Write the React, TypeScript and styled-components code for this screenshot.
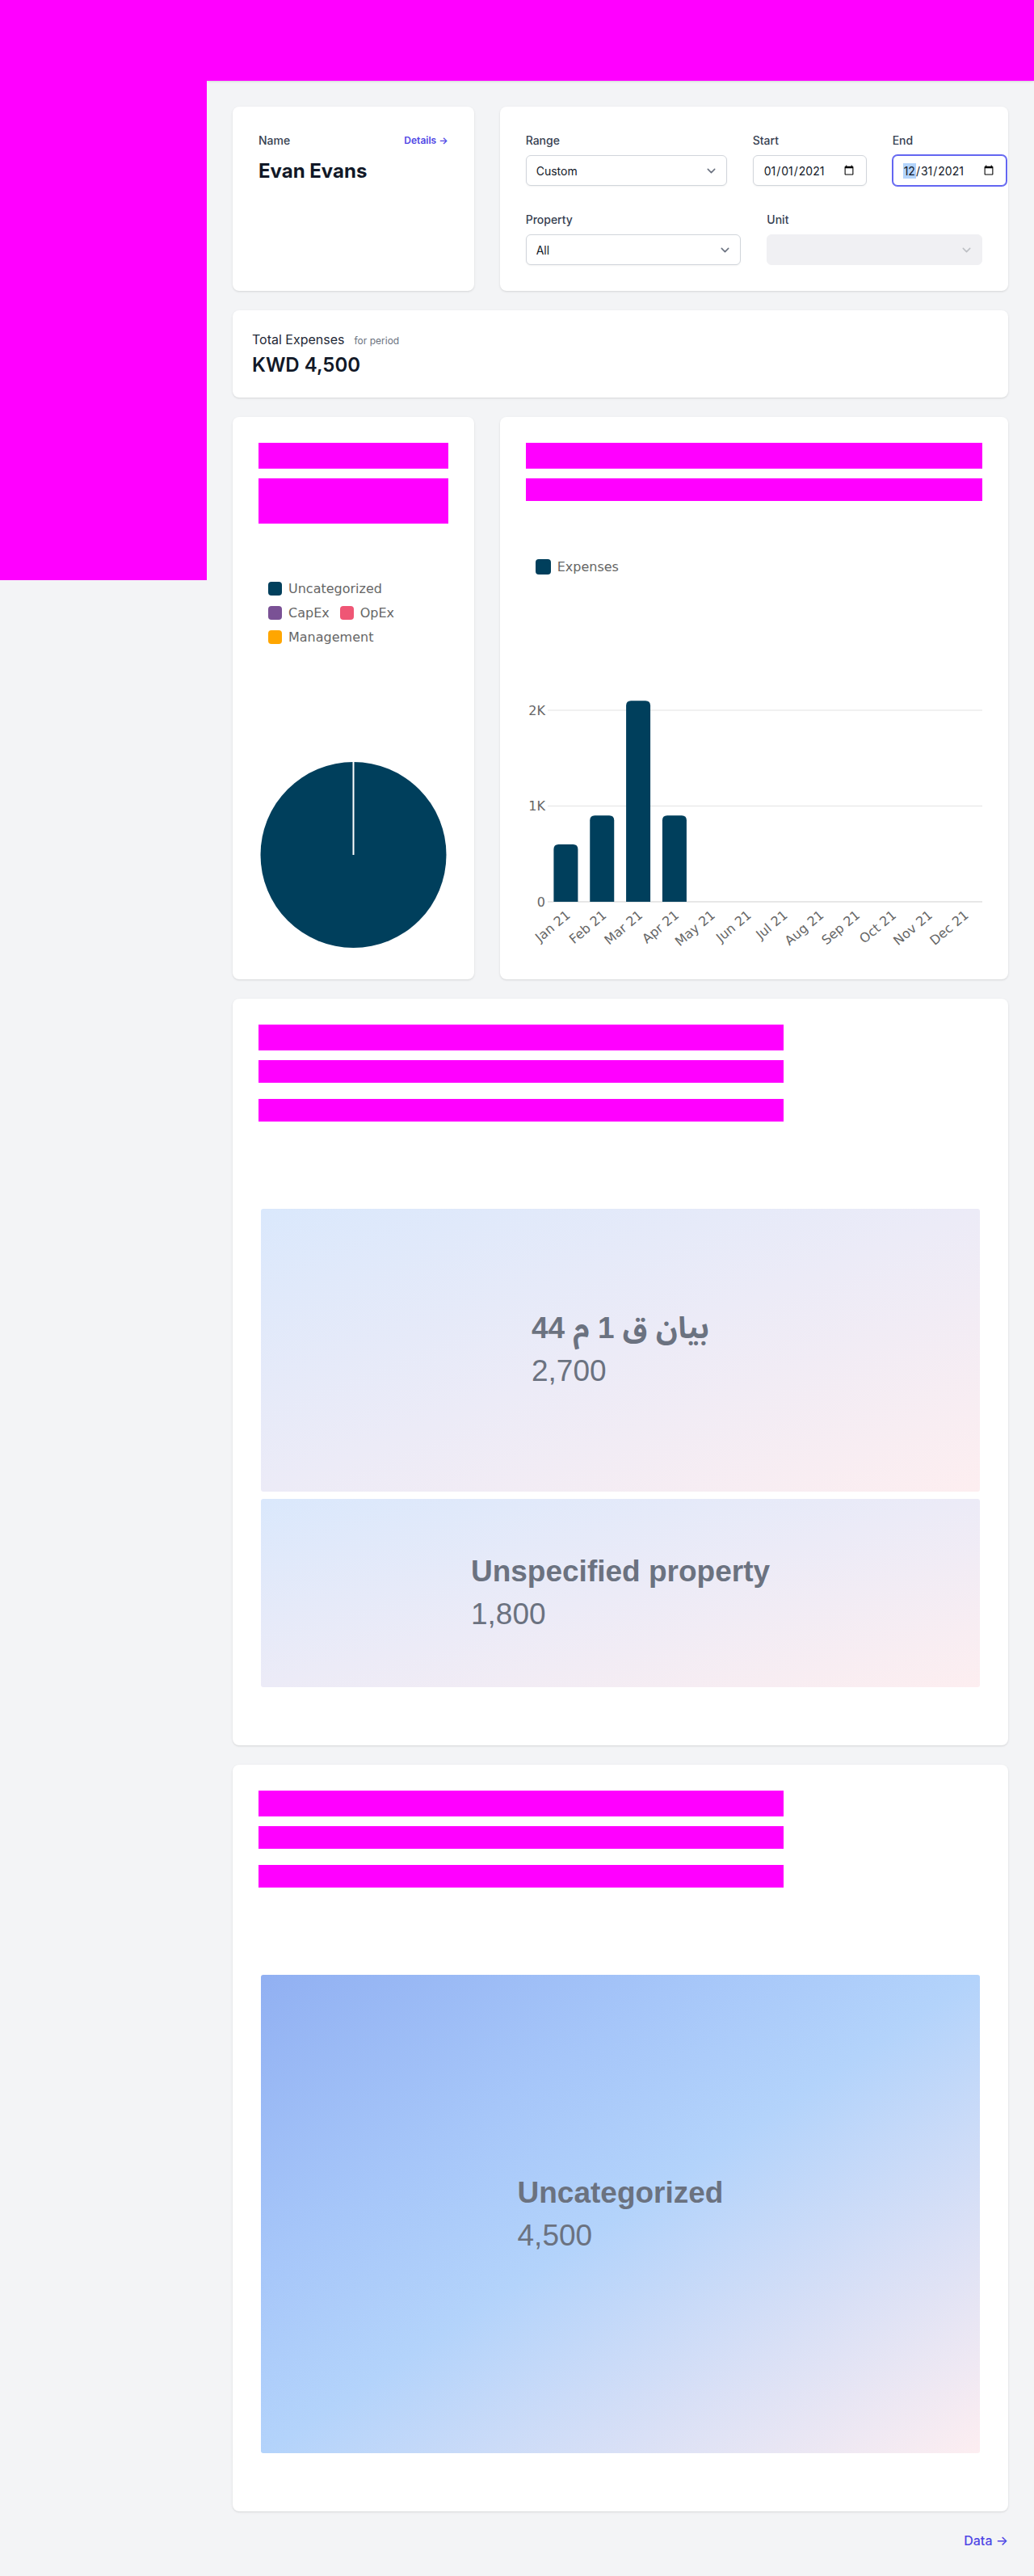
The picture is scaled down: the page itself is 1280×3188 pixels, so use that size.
import React from "react";
import styled, { createGlobalStyle } from "styled-components";

const GlobalStyle = createGlobalStyle`
  * { box-sizing: border-box; }
  html, body { margin: 0; padding: 0; }
  body {
    background: #f3f4f6;
    font-family: Inter, "Noto Sans", sans-serif;
    color: #111827;
    -webkit-font-smoothing: antialiased;
  }
`;

const MAGENTA = "#ff00ff";
const CHEVRON = (c: string) =>
  `url("data:image/svg+xml,%3csvg xmlns='http://www.w3.org/2000/svg' fill='none' viewBox='0 0 20 20'%3e%3cpath stroke='%23${c}' stroke-linecap='round' stroke-linejoin='round' stroke-width='1.5' d='M6 8l4 4 4-4'/%3e%3c/svg%3e")`;

const Shell = styled.div`
  display: grid;
  grid-template-columns: 256px minmax(0, 1fr);
  align-items: start;
`;

const Sidebar = styled.aside`
  height: 718px;
  background: ${MAGENTA};
  position: relative;
  z-index: 2;
`;

const Column = styled.div`
  display: flex;
  flex-direction: column;
  min-width: 0;
`;

const Header = styled.header`
  height: 100px;
  background: ${MAGENTA};
  position: relative;
  z-index: 1;
  box-shadow: 0 1px 3px 0 rgba(0, 0, 0, 0.1), 0 1px 2px -1px rgba(0, 0, 0, 0.1);
`;

const Main = styled.main`
  padding: 32px;
  display: flex;
  flex-direction: column;
  gap: 24px;
`;

const Row3 = styled.div`
  display: grid;
  grid-template-columns: repeat(3, minmax(0, 1fr));
  column-gap: 32px;
`;

const Card = styled.section<{ $span?: number; $pad?: number }>`
  grid-column: span ${(p) => p.$span ?? 1};
  background: #ffffff;
  border-radius: 8px;
  box-shadow: 0 1px 3px 0 rgba(0, 0, 0, 0.1), 0 1px 2px -1px rgba(0, 0, 0, 0.1);
  padding: ${(p) => p.$pad ?? 32}px;
  display: flex;
  flex-direction: column;
  min-width: 0;
`;

const Placeholder = styled.div<{ $h: number; $w?: number; $mt?: number }>`
  background: ${MAGENTA};
  height: ${(p) => p.$h}px;
  width: ${(p) => (p.$w ? `${p.$w}px` : "100%")};
  margin-top: ${(p) => p.$mt ?? 0}px;
  flex-shrink: 0;
`;

/* ---- Name card ---- */
const NameHead = styled.div`
  display: flex;
  justify-content: space-between;
  align-items: center;
`;

const FieldLabel = styled.label`
  font-size: 14px;
  line-height: 20px;
  font-weight: 500;
  color: #374151;
`;

const SmallLink = styled.a`
  font-size: 12px;
  line-height: 16px;
  font-weight: 600;
  color: #4f46e5;
  text-decoration: none;
`;

const PersonName = styled.h2`
  margin: 12px 0 0;
  font-size: 24px;
  line-height: 32px;
  font-weight: 700;
  color: #111827;
`;

/* ---- Filter card ---- */
const FilterBody = styled.div`
  display: flex;
  flex-direction: column;
  gap: 32px;
`;

const DateRow = styled.div`
  display: grid;
  grid-template-columns: 249px 141px 141px;
  column-gap: 32px;
`;

const PairRow = styled.div`
  display: grid;
  grid-template-columns: repeat(2, minmax(0, 1fr));
  column-gap: 32px;
`;

const Field = styled.div`
  display: flex;
  flex-direction: column;
  gap: 8px;
  min-width: 0;
`;

const Select = styled.select`
  appearance: none;
  -webkit-appearance: none;
  height: 38px;
  width: 100%;
  border: 1px solid #d1d5db;
  border-radius: 6px;
  padding: 0 40px 0 12px;
  font-family: Inter, sans-serif;
  font-size: 14px;
  color: #111827;
  background: #ffffff ${CHEVRON("6b7280")} no-repeat right 8px center / 21px 21px;
  box-shadow: 0 1px 2px 0 rgba(0, 0, 0, 0.05);
  &:disabled {
    background-color: #eaebee;
    background-image: ${CHEVRON("a3a6ad")};
    border-color: #eaebee;
    box-shadow: none;
  }
`;

const DateInput = styled.input`
  height: 38px;
  width: 100%;
  border: 1px solid #d1d5db;
  border-radius: 6px;
  padding: 0 12px;
  font-family: Inter, sans-serif;
  font-size: 14px;
  color: #111827;
  background: #ffffff;
  box-shadow: 0 1px 2px 0 rgba(0, 0, 0, 0.05);
  &:focus {
    outline: none;
    border-color: #6366f1;
    box-shadow: 0 0 0 1px #6366f1;
  }
  &:focus::-webkit-datetime-edit-month-field {
    background-color: #b3d4fc;
    color: #111827;
  }
`;

/* ---- Total card ---- */
const TotalHead = styled.div`
  display: flex;
  align-items: baseline;
  gap: 12px;
  height: 24px;
`;

const TotalLabel = styled.span`
  font-size: 16px;
  line-height: 24px;
  color: #1f2937;
`;

const TotalHint = styled.span`
  font-size: 12px;
  line-height: 16px;
  color: #6b7280;
`;

const TotalValue = styled.div`
  margin-top: 4px;
  font-size: 24px;
  line-height: 32px;
  font-weight: 600;
  color: #111827;
`;

/* ---- Chart cards ---- */
const ChartBox = styled.div<{ $h?: number }>`
  margin-top: 62px;
  display: flex;
  flex-direction: column;
  ${(p) => (p.$h ? `height: ${p.$h}px;` : "flex: 1;")}
`;

const Legend = styled.div`
  padding: 10px 0 0 12px;
  display: flex;
  flex-direction: column;
  gap: 13px;
`;

const LegendRow = styled.div`
  display: flex;
  gap: 13px;
`;

const LegendItem = styled.div`
  display: flex;
  align-items: center;
  gap: 8px;
`;

const Swatch = styled.span<{ $color: string; $size: number }>`
  width: ${(p) => p.$size}px;
  height: ${(p) => p.$size}px;
  border-radius: 4px;
  background: ${(p) => p.$color};
  flex-shrink: 0;
`;

const LegendText = styled.span`
  font-family: "DejaVu Sans", sans-serif;
  font-size: 16px;
  line-height: 17px;
  color: #666666;
`;

const PieSvg = styled.svg`
  margin-top: auto;
  margin-bottom: 7px;
  display: block;
`;

const BarSvg = styled.svg`
  margin-top: auto;
  display: block;
  overflow: visible;
`;

/* ---- Treemap cards ---- */
const Treemap = styled.div`
  margin: 108px 3px 40px;
  height: 592px;
  display: flex;
  flex-direction: column;
  gap: 9px;
`;

const Tile = styled.div<{ $weight: number; $strong?: boolean }>`
  flex: ${(p) => p.$weight} 1 0;
  min-height: 0;
  border-radius: 3px;
  display: flex;
  align-items: center;
  justify-content: center;
  background: ${(p) =>
    p.$strong
      ? "linear-gradient(to bottom right, #91b0f2 0%, #a6c6f9 30%, #b3d3fb 50%, #d9e0f6 75%, #fdeef1 100%)"
      : "linear-gradient(to bottom right, #dae8fc 0%, #ecebf7 50%, #fdeef0 100%)"};
`;

const TileText = styled.div`
  font-family: "Liberation Sans", Arial, "Noto Sans Arabic", "Noto Sans", "DejaVu Sans", sans-serif;
  color: #6b7280;
  font-size: 37px;
  line-height: 44px;
`;

const TileTitle = styled.div`
  font-weight: 700;
  height: 44px;
`;

const TileValue = styled.div`
  margin-top: 9px;
  height: 44px;
`;

const Footer = styled.div`
  display: flex;
  justify-content: flex-end;
  height: 24px;
`;

const FooterLink = styled.a`
  font-size: 16px;
  line-height: 24px;
  font-weight: 500;
  color: #4f46e5;
  text-decoration: none;
`;

/* ---- data ---- */
const months = ["Jan", "Feb", "Mar", "Apr", "May", "Jun", "Jul", "Aug", "Sep", "Oct", "Nov", "Dec"];
const values = [600, 900, 2100, 900, 0, 0, 0, 0, 0, 0, 0, 0];

const PLOT_L = 27;
const PLOT_R = 565;
const BASE = 394;
const PER_K = 118.5;

function roundedTopBar(x: number, y: number, w: number, h: number, r: number) {
  const rr = Math.min(r, h / 2, w / 2);
  return `M${x},${y + h} L${x},${y + rr} Q${x},${y} ${x + rr},${y} L${x + w - rr},${y} Q${x + w},${y} ${x + w},${y + rr} L${x + w},${y + h} Z`;
}

function BarChart() {
  const cat = (PLOT_R - PLOT_L) / 12;
  const grid = [
    { v: 2000, label: "2K" },
    { v: 1000, label: "1K" },
    { v: 0, label: "0" },
  ];
  return (
    <BarSvg width="565" height="458" viewBox="0 0 565 458">
      {grid.map((g) => {
        const y = BASE - (g.v / 1000) * PER_K;
        return (
          <g key={g.label}>
            <line x1={PLOT_L} x2={PLOT_R} y1={y} y2={y} stroke={g.v === 0 ? "#cfcfcf" : "#e3e3e3"} strokeWidth="1" />
            <text x="24" y={y} textAnchor="end" dominantBaseline="central" fontFamily="DejaVu Sans, sans-serif" fontSize="16" fill="#666">
              {g.label}
            </text>
          </g>
        );
      })}
      {values.map((v, i) => {
        if (!v) return null;
        const h = (v / 1000) * PER_K;
        const cx = PLOT_L + cat * (i + 0.5);
        return <path key={i} d={roundedTopBar(cx - 15, BASE - h, 30, h, 6)} fill="#003f5c" />;
      })}
      {months.map((m, i) => {
        const cx = PLOT_L + cat * (i + 0.5);
        return (
          <text
            key={m}
            transform={`translate(${cx + 3}, ${BASE + 14}) rotate(-40)`}
            textAnchor="end"
            dominantBaseline="central"
            fontFamily="DejaVu Sans, sans-serif"
            fontSize="16"
            fill="#666"
          >
            {m} 21
          </text>
        );
      })}
    </BarSvg>
  );
}

const pieLegend = [
  [{ label: "Uncategorized", color: "#003f5c" }],
  [
    { label: "CapEx", color: "#7a5195" },
    { label: "OpEx", color: "#ef5675" },
  ],
  [{ label: "Management", color: "#ffa600" }],
];

export default function App() {
  return (
    <>
      <GlobalStyle />
      <Shell>
        <Sidebar />
        <Column>
          <Header />
          <Main>
            <Row3>
              <Card>
                <NameHead>
                  <FieldLabel>Name</FieldLabel>
                  <SmallLink href="#">Details →</SmallLink>
                </NameHead>
                <PersonName>Evan Evans</PersonName>
              </Card>
              <Card $span={2}>
                <FilterBody>
                  <DateRow>
                    <Field>
                      <FieldLabel>Range</FieldLabel>
                      <Select defaultValue="custom">
                        <option value="custom">Custom</option>
                        <option value="year">This year</option>
                      </Select>
                    </Field>
                    <Field>
                      <FieldLabel>Start</FieldLabel>
                      <DateInput type="date" defaultValue="2021-01-01" />
                    </Field>
                    <Field>
                      <FieldLabel>End</FieldLabel>
                      <DateInput type="date" defaultValue="2021-12-31" autoFocus />
                    </Field>
                  </DateRow>
                  <PairRow>
                    <Field>
                      <FieldLabel>Property</FieldLabel>
                      <Select defaultValue="all">
                        <option value="all">All</option>
                      </Select>
                    </Field>
                    <Field>
                      <FieldLabel>Unit</FieldLabel>
                      <Select disabled defaultValue="">
                        <option value=""></option>
                      </Select>
                    </Field>
                  </PairRow>
                </FilterBody>
              </Card>
            </Row3>

            <Card $pad={24}>
              <TotalHead>
                <TotalLabel>Total Expenses</TotalLabel>
                <TotalHint>for period</TotalHint>
              </TotalHead>
              <TotalValue>KWD 4,500</TotalValue>
            </Card>

            <Row3>
              <Card>
                <Placeholder $h={32} />
                <Placeholder $h={56} $mt={12} />
                <ChartBox $h={470}>
                  <Legend>
                    {pieLegend.map((row, r) => (
                      <LegendRow key={r}>
                        {row.map((it) => (
                          <LegendItem key={it.label}>
                            <Swatch $color={it.color} $size={17} />
                            <LegendText>{it.label}</LegendText>
                          </LegendItem>
                        ))}
                      </LegendRow>
                    ))}
                  </Legend>
                  <PieSvg width="235" height="230" viewBox="0 0 235 230">
                    <circle cx="117.5" cy="115" r="115" fill="#003f5c" />
                    <line x1="117.5" y1="115" x2="117.5" y2="0" stroke="#ffffff" strokeWidth="2" />
                  </PieSvg>
                </ChartBox>
              </Card>
              <Card $span={2}>
                <Placeholder $h={32} />
                <Placeholder $h={28} $mt={12} />
                <ChartBox>
                  <Legend>
                    <LegendRow>
                      <LegendItem>
                        <Swatch $color="#003f5c" $size={19} />
                        <LegendText>Expenses</LegendText>
                      </LegendItem>
                    </LegendRow>
                  </Legend>
                  <BarChart />
                </ChartBox>
              </Card>
            </Row3>

            <Card>
              <Placeholder $h={32} $w={650} />
              <Placeholder $h={28} $w={650} $mt={12} />
              <Placeholder $h={28} $w={650} $mt={20} />
              <Treemap>
                <Tile $weight={2700}>
                  <TileText>
                    <TileTitle>بيان ق 1 م 44</TileTitle>
                    <TileValue>2,700</TileValue>
                  </TileText>
                </Tile>
                <Tile $weight={1800}>
                  <TileText>
                    <TileTitle>Unspecified property</TileTitle>
                    <TileValue>1,800</TileValue>
                  </TileText>
                </Tile>
              </Treemap>
            </Card>

            <Card>
              <Placeholder $h={32} $w={650} />
              <Placeholder $h={28} $w={650} $mt={12} />
              <Placeholder $h={28} $w={650} $mt={20} />
              <Treemap>
                <Tile $weight={1} $strong>
                  <TileText>
                    <TileTitle>Uncategorized</TileTitle>
                    <TileValue>4,500</TileValue>
                  </TileText>
                </Tile>
              </Treemap>
            </Card>

            <Footer>
              <FooterLink href="#">Data →</FooterLink>
            </Footer>
          </Main>
        </Column>
      </Shell>
    </>
  );
}
